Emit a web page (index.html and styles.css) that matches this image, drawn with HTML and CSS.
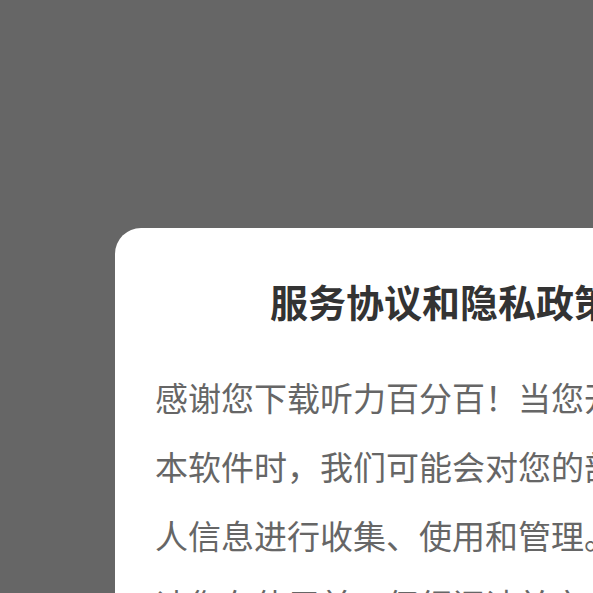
FILE: index.html
```html
<!DOCTYPE html>
<html lang="zh-CN">
<head>
<meta charset="utf-8">
<title>服务协议和隐私政策</title>
<link rel="stylesheet" href="styles.css">
</head>
<body>
<div class="overlay">
  <div class="dialog">
    <h1 class="dialog-title">服务协议和隐私政策</h1>
    <p class="dialog-text">感谢您下载听力百分百！当您开始使用<br>本软件时，我们可能会对您的部分个<br>人信息进行收集、使用和管理。为了<br>请您在使用前，仔细阅读并充分理解</p>
  </div>
</div>
</body>
</html>
```
FILE: styles.css
```css
html, body {
  margin: 0;
  padding: 0;
  width: 593px;
  height: 593px;
  overflow: hidden;
  background: #666666;
  font-family: "Noto Sans CJK SC", "Noto Sans", sans-serif;
}
.overlay {
  width: 593px;
  height: 593px;
  overflow: hidden;
  padding: 228px 0 0 115px;
  box-sizing: border-box;
}
.dialog {
  width: 652px;
  background: #ffffff;
  border-radius: 26px;
  padding: 50px 0 60px;
  box-sizing: border-box;
}
.dialog-title {
  margin: 0;
  font-size: 38px;
  line-height: 46px;
  font-weight: 700;
  color: #333333;
  text-align: center;
}
.dialog-text {
  margin: 39px 0 0;
  padding: 0 40px;
  font-size: 33px;
  line-height: 69px;
  color: #666666;
  white-space: nowrap;
}
```
